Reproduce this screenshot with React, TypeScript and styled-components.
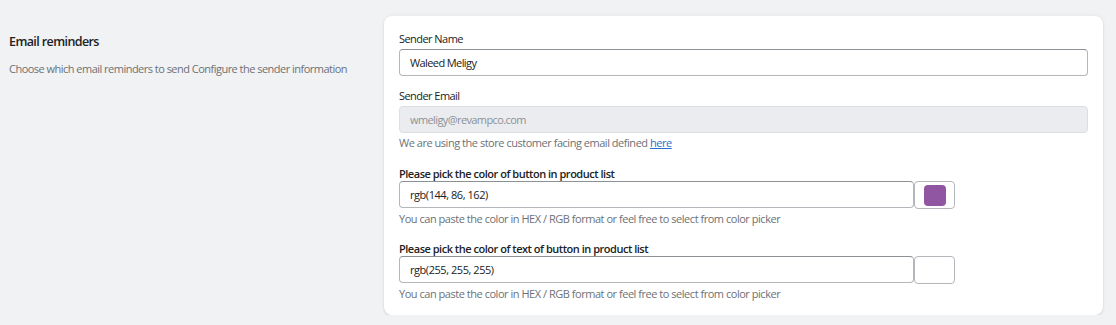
import React from "react";
import styled, { createGlobalStyle } from "styled-components";

const Global = createGlobalStyle`
  html, body { margin: 0; padding: 0; background: #f1f2f4; }
  body {
    font-family: "Open Sans", "Noto Sans", sans-serif;
    color: #202223;
  }
  * { box-sizing: border-box; }
`;

const Page = styled.div`
  display: grid;
  grid-template-columns: 375px 719px;
  padding: 16px 0 0 9px;
`;

const Aside = styled.div`
  padding-top: 16px;
`;

const AsideTitle = styled.h2`
  margin: 0;
  font-size: 12.5px;
  letter-spacing: -0.6px;
  line-height: 20px;
  font-weight: 600;
  color: #202223;
`;

const AsideText = styled.p`
  margin: 7px 0 0;
  font-size: 11px;
  letter-spacing: -0.52px;
  line-height: 20px;
  color: #6d7175;
`;

const Card = styled.div`
  background: #fff;
  border-radius: 8px;
  box-shadow: 0 0 5px rgba(23, 24, 24, 0.05), 0 1px 2px rgba(0, 0, 0, 0.12);
  padding: 13px 15px 12px 15px;
  height: 299px;
`;

const Field = styled.div<{ $gap?: number }>`
  display: flex;
  flex-direction: column;
  margin-top: ${(p) => p.$gap ?? 0}px;
`;

const Label = styled.label<{ $strong?: boolean }>`
  font-size: 11px;
  letter-spacing: ${(p) => (p.$strong ? "-0.48px" : "-0.55px")};
  line-height: ${(p) => (p.$strong ? "15px" : "20px")};
  font-weight: ${(p) => (p.$strong ? 600 : 400)};
  color: #202223;
`;

const Input = styled.div<{ $disabled?: boolean }>`
  height: 27px;
  flex: none;
  display: flex;
  align-items: center;
  padding: 0 10px;
  font-size: 11px;
  letter-spacing: -0.6px;
  border-radius: 4px;
  border: 1px solid ${(p) => (p.$disabled ? "#dcdee2" : "#b3b7bc")};
  border-top-color: ${(p) => (p.$disabled ? "#dcdee2" : "#8c9196")};
  background: ${(p) => (p.$disabled ? "#ebecef" : "#fff")};
  color: ${(p) => (p.$disabled ? "#8c9196" : "#202223")};
`;

const ColorInput = styled(Input)`
  flex: 1 1 auto;
  letter-spacing: -0.45px;
`;

const Help = styled.div`
  font-size: 11px;
  letter-spacing: -0.47px;
  line-height: 20px;
  color: #6d7175;
`;

const Link = styled.a`
  color: #2c6ecb;
  text-decoration: underline;
`;

const ColorRow = styled.div`
  display: flex;
  width: 556px;
  align-items: flex-start;
`;

const Swatch = styled.div`
  width: 41px;
  height: 28px;
  border: 1px solid #b3b7bc;
  border-radius: 4px;
  display: flex;
  align-items: center;
  justify-content: center;
  background: #fff;
`;

const SwatchFill = styled.div<{ $color: string }>`
  width: 22px;
  height: 21px;
  border-radius: 4px;
  background: ${(p) => p.$color};
`;

export default function App() {
  return (
    <>
      <Global />
      <Page>
        <Aside>
          <AsideTitle>Email reminders</AsideTitle>
          <AsideText>Choose which email reminders to send Configure the sender information</AsideText>
        </Aside>
        <Card>
          <Field>
            <Label>Sender Name</Label>
            <Input>Waleed Meligy</Input>
          </Field>
          <Field $gap={10}>
            <Label>Sender Email</Label>
            <Input $disabled>wmeligy@revampco.com</Input>
            <Help>
              We are using the store customer facing email defined <Link href="#">here</Link>
            </Help>
          </Field>
          <Field $gap={13}>
            <Label $strong>Please pick the color of button in product list</Label>
            <ColorRow>
              <ColorInput>rgb(144, 86, 162)</ColorInput>
              <Swatch>
                <SwatchFill $color="rgb(144, 86, 162)" />
              </Swatch>
            </ColorRow>
            <Help>You can paste the color in HEX / RGB format or feel free to select from color picker</Help>
          </Field>
          <Field $gap={12}>
            <Label $strong>Please pick the color of text of button in product list</Label>
            <ColorRow>
              <ColorInput>rgb(255, 255, 255)</ColorInput>
              <Swatch>
                <SwatchFill $color="#ffffff" />
              </Swatch>
            </ColorRow>
            <Help>You can paste the color in HEX / RGB format or feel free to select from color picker</Help>
          </Field>
        </Card>
      </Page>
    </>
  );
}
